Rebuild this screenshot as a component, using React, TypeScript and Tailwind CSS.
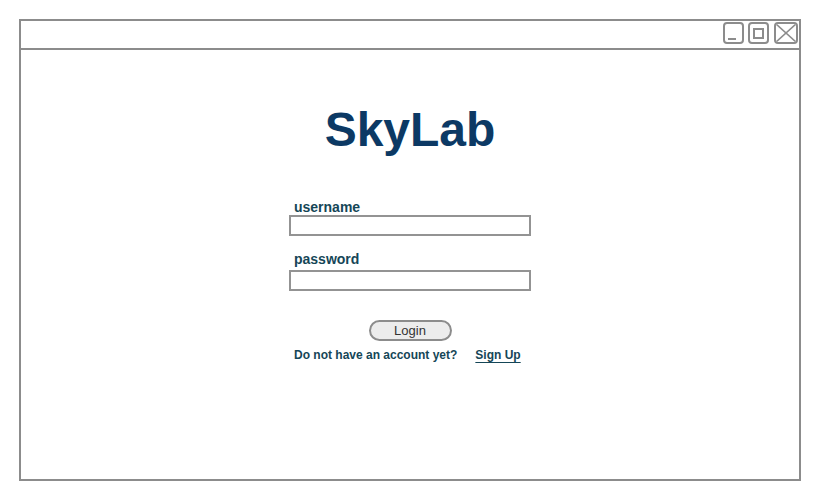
export default function App() {
  return (
    <div className="w-[819px] h-[500px] bg-white pl-[19px] pt-[19px] font-['Liberation_Sans',Arial,sans-serif]">
      <div className="w-[782px] h-[462px] border-2 border-[#8c8c8c] flex flex-col">
        <div className="h-[29px] shrink-0 border-b-2 border-[#8c8c8c] flex justify-end items-start pt-px pr-px">
          <div className="relative w-[21px] h-[22px] border-2 border-[#8c8c8c] rounded-[4px]">
            <div className="absolute left-[3px] top-[14px] w-[8px] h-[2px] bg-[#8c8c8c]" />
          </div>
          <div className="ml-[4px] w-[21px] h-[22px] border-2 border-[#8c8c8c] rounded-[4px] flex items-center justify-center">
            <div className="w-[11px] h-[11px] border-2 border-[#8c8c8c]" />
          </div>
          <div className="ml-[5px] w-[24px] h-[22px] border-2 border-[#8c8c8c] rounded-[4px] overflow-hidden">
            <svg width="20" height="18" viewBox="0 0 20 18" className="block">
              <line x1="0" y1="0" x2="20" y2="18" stroke="#8c8c8c" strokeWidth="1.6" />
              <line x1="20" y1="0" x2="0" y2="18" stroke="#8c8c8c" strokeWidth="1.6" />
            </svg>
          </div>
        </div>
        <div className="flex-1 flex flex-col items-center">
          <div className="mt-[56px] text-[48px] leading-[48px] font-bold text-[#0c3964]">SkyLab</div>
          <div className="mt-[45px] w-[242px] flex flex-col">
            <div className="pl-[5px] text-[14px] leading-[16px] font-bold text-[#154657]">username</div>
            <div className="h-[21px] w-full border-2 border-[#939393] bg-white" />
            <div className="mt-[15px] pl-[5px] text-[14px] leading-[16px] font-bold text-[#154657]">password</div>
            <div className="mt-[3px] h-[21px] w-full border-2 border-[#939393] bg-white" />
            <div className="mt-[29px] self-center w-[83px] h-[21px] rounded-full border-2 border-[#8c8c8c] bg-[#ececec] flex items-center justify-center text-[13px] leading-none text-[#333333]">
              Login
            </div>
            <div className="mt-[7px] pl-[5px] flex text-[12px] leading-[14px] font-bold text-[#154657]">
              <span>Do not have an account yet?</span>
              <span className="ml-[18px] underline underline-offset-[3px]">Sign Up</span>
            </div>
          </div>
        </div>
      </div>
    </div>
  );
}
